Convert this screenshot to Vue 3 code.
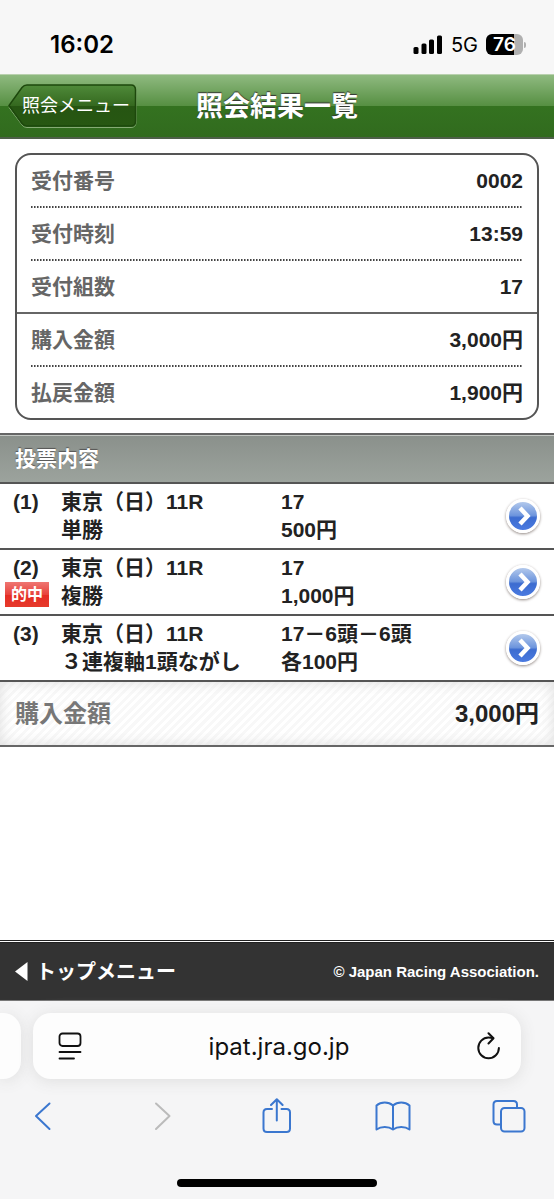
<script setup>
const receipt = [
  { label: '受付番号', value: '0002' },
  { label: '受付時刻', value: '13:59' },
  { label: '受付組数', value: '17' },
]
const amounts = [
  { label: '購入金額', value: '3,000円' },
  { label: '払戻金額', value: '1,900円' },
]
const bets = [
  { no: '(1)', race: '東京（日）11R', type: '単勝', pick: '17', stake: '500円', hit: false },
  { no: '(2)', race: '東京（日）11R', type: '複勝', pick: '17', stake: '1,000円', hit: true },
  { no: '(3)', race: '東京（日）11R', type: '３連複軸1頭ながし', pick: '17－6頭－6頭', stake: '各100円', hit: false },
]
</script>

<template>
  <div class="screen">
    <div class="status">
      <time class="clock">16:02</time>
      <div class="signals">
        <svg class="bars" width="30" height="20" viewBox="0 0 30 20" aria-hidden="true">
          <rect x="0.500" y="12" width="5" height="7" rx="1.500" />
          <rect x="8.500" y="8.500" width="5" height="10.500" rx="1.500" />
          <rect x="16" y="4.500" width="5" height="14.500" rx="1.500" />
          <rect x="24" y="0.500" width="5" height="18.500" rx="1.500" />
        </svg>
        <span class="network">5G</span>
        <span class="battery"><span class="level">76</span><span class="cap"></span></span>
      </div>
    </div>

    <header class="titlebar">
      <button class="back" type="button">
        <svg class="back-shape" viewBox="0 0 129 44" aria-hidden="true">
          <defs>
            <linearGradient id="backFill" x1="0" y1="0" x2="0" y2="1">
              <stop offset="0" stop-color="#4f8a3a" />
              <stop offset="0.5" stop-color="#35691f" />
              <stop offset="0.5" stop-color="#265512" />
              <stop offset="1" stop-color="#275712" />
            </linearGradient>
          </defs>
          <path d="M18 2.500H123Q128 2.500 128 7.500V38Q128 43.500 123 43.500H19Q16 43.500 14 41L1 23.500" fill="none" stroke="#86ab75" stroke-width="1" />
          <path d="M19 1H123Q127.500 1 127.500 6V37Q127.500 42 123 42H19Q16 42 14 39.500L1 21.500L14 3.500Q16 1 19 1Z" fill="url(#backFill)" stroke="#1d480c" stroke-width="1.500" />
        </svg>
        <span class="back-label">照会メニュー</span>
      </button>
      <h1 class="title">照会結果一覧</h1>
    </header>

    <main class="content">
      <section class="card">
        <dl class="group">
          <div v-for="row in receipt" :key="row.label" class="pair">
            <dt>{{ row.label }}</dt>
            <dd>{{ row.value }}</dd>
          </div>
        </dl>
        <dl class="group">
          <div v-for="row in amounts" :key="row.label" class="pair">
            <dt>{{ row.label }}</dt>
            <dd>{{ row.value }}</dd>
          </div>
        </dl>
      </section>

      <h2 class="section">投票内容</h2>
      <ul class="bets">
        <li v-for="bet in bets" :key="bet.no">
          <a class="bet" href="#">
            <span class="number">
              <span class="no">{{ bet.no }}</span>
              <span v-if="bet.hit" class="hit">的中</span>
            </span>
            <span class="cell"><span>{{ bet.race }}</span><span>{{ bet.type }}</span></span>
            <span class="cell"><span>{{ bet.pick }}</span><span>{{ bet.stake }}</span></span>
            <span class="go">
              <svg width="18" height="20" viewBox="0 0 18 20" aria-hidden="true">
                <path d="M6 2L13.500 10L6 18" fill="none" stroke="#fff" stroke-width="4.500" />
              </svg>
            </span>
          </a>
        </li>
      </ul>

      <div class="total">
        <span class="total-label">購入金額</span>
        <span>3,000円</span>
      </div>
    </main>

    <footer class="footer">
      <a class="top" href="#">
        <svg width="13" height="19" viewBox="0 0 13 19" aria-hidden="true"><path d="M12.500 0V19L0 9.500Z" fill="#fff" /></svg>
        <span>トップメニュー</span>
      </a>
      <small class="copyright">© Japan Racing Association.</small>
    </footer>

    <div class="browser">
      <div class="address-row">
        <div class="previous"></div>
        <div class="address">
          <button class="icon" type="button" aria-label="Page menu">
            <svg width="24" height="28" viewBox="0 0 24 28" fill="none" stroke="#111" stroke-width="1.800" stroke-linecap="round">
              <rect x="1.500" y="1.500" width="21" height="12.500" rx="3" />
              <path d="M1.500 20H22.500M1.500 26.500H16" />
            </svg>
          </button>
          <input class="url" type="text" value="ipat.jra.go.jp" aria-label="Address" />
          <button class="icon" type="button" aria-label="Reload">
            <svg width="24" height="28" viewBox="0 0 24 28" fill="none" stroke="#111" stroke-width="2" stroke-linecap="round" stroke-linejoin="round">
              <path d="M17 6.200Q15 5.600 12.500 5.600A10.300 10.300 0 1 0 22.900 16" />
              <path d="M12.500 1.200L17.500 6.300L12.500 11.500" />
            </svg>
          </button>
        </div>
      </div>
      <nav class="tools" aria-label="Browser">
        <button class="icon" type="button" aria-label="Back">
          <svg width="36" height="36" viewBox="0 0 36 36"><path d="M24.500 5.500L11 18L24.500 31" /></svg>
        </button>
        <button class="icon off" type="button" aria-label="Forward" disabled>
          <svg width="36" height="36" viewBox="0 0 36 36"><path d="M14 5.500L27.500 18L14 31" /></svg>
        </button>
        <button class="icon" type="button" aria-label="Share">
          <svg width="36" height="36" viewBox="0 0 36 36"><path d="M14 11H9Q5.500 11 5.500 14.500V30.500Q5.500 34 9 34H28.500Q32 34 32 30.500V14.500Q32 11 28.500 11H23.500M18.800 22.500V1.500M13 7L18.800 1.200L24.600 7" /></svg>
        </button>
        <button class="icon" type="button" aria-label="Bookmarks">
          <svg width="36" height="36" viewBox="0 0 36 36"><path d="M18 7.500C13.500 3.500 6 3.500 1.500 7.500V31.500C6 28 13.500 28 18 31.500ZM18 7.500C22.500 3.500 30 3.500 34.500 7.500V31.500C30 28 22.500 28 18 31.500" /></svg>
        </button>
        <button class="icon" type="button" aria-label="Tabs">
          <svg width="36" height="36" viewBox="0 0 36 36"><path d="M9.500 26.500H6Q2.500 26.500 2.500 23V6.500Q2.500 3 6 3H22.500Q26 3 26 6.500V10" /><rect x="10" y="10" width="23.500" height="23.500" rx="3.500" /></svg>
        </button>
      </nav>
      <div class="home"></div>
    </div>
  </div>
</template>

<style>
body {
  background: #fff;
}
</style>

<style scoped>
.screen {
  box-sizing: border-box;
  min-height: 100vh;
  display: flex;
  flex-direction: column;
  font-family: "Liberation Sans", "Noto Sans CJK JP", sans-serif;
  font-size: 21px;
  font-weight: 700;
  line-height: 28px;
  color: #222;
}
button, input {
  font: inherit;
  border: 0;
  padding: 0;
  margin: 0;
  background: none;
}
a {
  color: inherit;
  text-decoration: none;
}
h1, h2, dl, dd, ul {
  margin: 0;
  padding: 0;
}
ul {
  list-style: none;
}
svg {
  display: block;
}

.status {
  display: flex;
  justify-content: space-between;
  align-items: center;
  height: 45px;
  padding: 22px 28px 7px 50px;
  background: #f7f7f7;
  color: #000;
  font-family: Inter, sans-serif;
}
.clock {
  font-size: 24px;
  font-weight: 600;
}
.signals {
  display: flex;
  align-items: center;
  gap: 8px;
}
.network {
  font-size: 20px;
  font-weight: 400;
}
.battery {
  display: flex;
  align-items: center;
  gap: 1px;
}
.level {
  width: 37px;
  border-radius: 6px;
  background: linear-gradient(90deg, #000 76%, #b0b0b0 76%);
  color: #fff;
  font-size: 19px;
  font-weight: 600;
  line-height: 21px;
  text-align: center;
}
.cap {
  width: 2px;
  height: 6px;
  border-radius: 0 2px 2px 0;
  background: #b0b0b0;
}

.titlebar {
  display: grid;
  grid-template-columns: 1fr auto 1fr;
  align-items: center;
  height: 62px;
  padding: 0 8px;
  border-top: 1px solid #b9d1ae;
  border-bottom: 2px solid #4e5f49;
  background: linear-gradient(#8fba80 0%, #568f42 50%, #347220 50%, #316b1e 100%);
}
.back {
  position: relative;
  width: 129px;
  height: 44px;
  color: #fff;
  font-size: 18px;
  font-weight: 400;
  text-align: left;
}
.back-shape {
  position: absolute;
  inset: 0;
  width: 100%;
  height: 100%;
}
.back-label {
  position: relative;
  padding-left: 14px;
}
.title {
  padding-top: 2px;
  color: #fff;
  font-size: 27px;
  line-height: 36px;
  text-shadow: 0 -1px 1px #333;
}

.content {
  flex: 1;
}
.card {
  margin: 14px 15px 13px;
  border: 2px solid #555;
  border-radius: 16px;
}
.group + .group {
  border-top: 2px solid #666;
}
.group {
  padding: 0 14px;
}
.pair {
  display: flex;
  justify-content: space-between;
  padding: 12px 0 11px;
}
.pair + .pair::before {
  content: none;
}
.pair:not(:last-child) {
  padding-bottom: 13px;
  background: repeating-linear-gradient(90deg, #444 0 1px, #999 1px 2px, #fff 2px 3px) bottom / 100% 2px no-repeat;
}
dt {
  color: #666;
}

.section {
  padding: 10px 15px 9px;
  border-top: 2px solid #666;
  border-bottom: 2px solid #555;
  background: linear-gradient(#8a908b, #9ca39d);
  box-shadow: inset 0 1px #c4c8c4;
  color: #fff;
  font-size: 21px;
  line-height: 28px;
  text-shadow: 0 -1px 1px #555;
}
.bet {
  display: grid;
  grid-template-columns: 56px 220px 1fr auto;
  align-items: center;
  padding: 4px 14px 4px 5px;
  border-bottom: 2px solid #555;
}
.number, .cell {
  display: flex;
  flex-direction: column;
}
.number {
  align-self: start;
  align-items: flex-start;
}
.no {
  padding-left: 8px;
}
.hit {
  padding: 0 6px;
  background: linear-gradient(#ef7672, #e8443d 50%, #e52c24 50%, #e63a2b);
  color: #fff;
  font-size: 16px;
  line-height: 25px;
}
.go {
  display: grid;
  place-items: center;
  width: 28px;
  height: 28px;
  border: 3px solid #fff;
  border-radius: 50%;
  background: linear-gradient(#b3c9ec, #6d95dd 48%, #3c6cd0 56%, #4a7ae0);
  box-shadow: 0 1px 3px #8f8580;
}
.total {
  display: flex;
  justify-content: space-between;
  align-items: center;
  padding: 15px 15px 14px;
  border-bottom: 2px solid #666;
  background: repeating-linear-gradient(135deg, #fff 0 3px, #f8f8f8 3px 6px);
  box-shadow: inset 0 0 14px #ddd;
  font-size: 24px;
  line-height: 34px;
}
.total-label {
  color: #777;
}

.footer {
  display: flex;
  justify-content: space-between;
  align-items: center;
  height: 57px;
  padding: 0 15px;
  border-top: 3px double #222;
  border-bottom: 1px solid #777;
  background: #333;
  background-clip: padding-box;
  color: #fff;
}
.top {
  display: flex;
  align-items: center;
  gap: 8px;
  font-size: 20px;
}
.copyright {
  font-size: 15px;
}

.browser {
  background: #f5f5f6;
  color: #000;
  font-family: Inter, sans-serif;
  font-weight: 400;
}
.address-row {
  display: flex;
  gap: 12px;
  padding: 12px 33px 0 0;
}
.previous, .address {
  height: 66px;
  background: #fdfdfd;
  box-shadow: 0 2px 16px #dedede;
}
.previous {
  width: 21px;
  border-radius: 0 18px 18px 0;
}
.address {
  flex: 1;
  display: flex;
  align-items: center;
  padding: 0 21px 0 25px;
  border-radius: 18px;
}
.url {
  flex: 1;
  min-width: 0;
  padding-top: 2px;
  color: #111;
  font-size: 24px;
  text-align: center;
}
.tools {
  display: flex;
  justify-content: space-between;
  align-items: center;
  padding: 19px 27px 0 25px;
}
.tools svg {
  fill: none;
  stroke: #3b77cf;
  stroke-width: 2;
  stroke-linecap: round;
  stroke-linejoin: round;
}
.tools .off svg {
  stroke: #bbb;
}
.home {
  width: 36%;
  height: 8px;
  margin: 45px auto 12px;
  border-radius: 4px;
  background: #000;
}
</style>
